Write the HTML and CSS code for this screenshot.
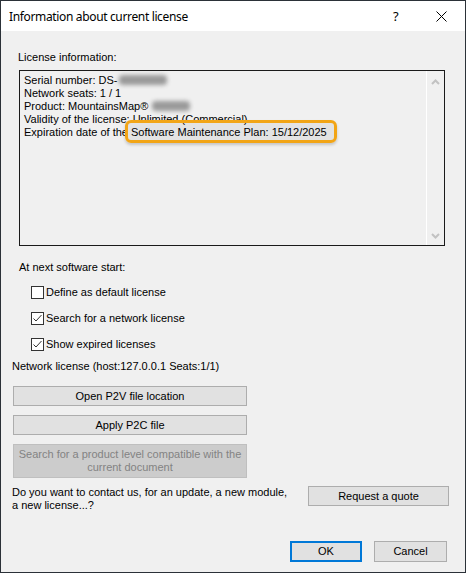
FILE: index.html
```html
<!DOCTYPE html>
<html>
<head>
<meta charset="utf-8">
<link rel="stylesheet" href="styles.css">
</head>
<body>
<div class="window">
  <div class="titlebar">
    <span class="title">Information about current license</span>
    <span class="help">?</span>
    <span class="close"><svg width="11" height="11" viewBox="0 0 11 11"><path d="M0.5 0.5 L10.5 10.5 M10.5 0.5 L0.5 10.5" stroke="#000" stroke-width="1" fill="none"/></svg></span>
  </div>
  <div class="content">
    <div class="section-label">License information:</div>
    <div class="infobox">
      <div class="infotext">
        <div>Serial number: DS-<span class="blur b1"></span></div>
        <div>Network seats: 1 / 1</div>
        <div>Product: MountainsMap® <span class="blur b2"></span></div>
        <div>Validity of the license: Unlimited (Commercial)</div>
        <div>Expiration date of the <span class="hl">Software Maintenance Plan: 15/12/2025</span></div>
      </div>
      <div class="scrollbar">
        <svg width="9" height="6" viewBox="0 0 9 6"><path d="M1 5 L4.5 1.5 L8 5" stroke="#c2c2c2" stroke-width="2" fill="none"/></svg>
        <svg width="9" height="6" viewBox="0 0 9 6"><path d="M1 1 L4.5 4.5 L8 1" stroke="#c2c2c2" stroke-width="2" fill="none"/></svg>
      </div>
    </div>
    <div class="next-label">At next software start:</div>
    <div class="checks">
      <label class="check"><span class="box"></span>Define as default license</label>
      <label class="check"><span class="box"><svg width="11" height="11" viewBox="0 0 11 11"><path d="M1.5 5.5 L4 8 L9.5 2" stroke="#333" stroke-width="1" fill="none"/></svg></span>Search for a network license</label>
      <label class="check"><span class="box"><svg width="11" height="11" viewBox="0 0 11 11"><path d="M1.5 5.5 L4 8 L9.5 2" stroke="#333" stroke-width="1" fill="none"/></svg></span>Show expired licenses</label>
    </div>
    <div class="netlic">Network license (host:127.0.0.1 Seats:1/1)</div>
    <div class="btn-stack">
      <div class="btn">Open P2V file location</div>
      <div class="btn">Apply P2C file</div>
      <div class="btn disabled">Search for a product level compatible with the<br>current document</div>
    </div>
    <div class="contact-row">
      <div class="contact-text">Do you want to contact us, for an update, a new module,<br>a new license...?</div>
      <div class="btn quote">Request a quote</div>
    </div>
    <div class="footer">
      <div class="btn ok">OK</div>
      <div class="btn cancel">Cancel</div>
    </div>
  </div>
</div>
</body>
</html>
```

FILE: styles.css
```css
html, body {
  margin: 0;
  padding: 0;
  background: #f0f0f0;
}
.window {
  width: 466px;
  height: 573px;
  box-sizing: border-box;
  border: 1px solid #2b3138;
  background: #f0f0f0;
  display: flex;
  flex-direction: column;
  font-family: "Liberation Sans", Arial, sans-serif;
  font-size: 11px;
  color: #000;
}
.titlebar {
  height: 30px;
  background: #fff;
  display: flex;
  align-items: center;
  flex-shrink: 0;
}
.title {
  font-family: "Noto Sans", "Open Sans", sans-serif;
  font-size: 12px;
  letter-spacing: -0.35px;
  margin-left: 8px;
  flex: 1;
}
.help {
  font-family: "Noto Sans", sans-serif;
  font-size: 13px;
  width: 10px;
  margin-right: 33px;
}
.close {
  width: 11px;
  height: 11px;
  margin-right: 18px;
  display: flex;
}
.content {
  display: flex;
  flex-direction: column;
  padding-left: 11px;
  line-height: 13px;
}
.section-label {
  margin-top: 20px;
  margin-left: 6px;
}
.infobox {
  margin-top: 6px;
  margin-left: 7px;
  width: 426px;
  height: 176px;
  box-sizing: border-box;
  border: 1px solid #1a1a1a;
  display: flex;
}
.infotext {
  flex: 1;
  padding: 3px 0 0 4px;
}
.blur {
  display: inline-block;
  height: 10px;
  vertical-align: -1px;
  background: #9a9a9a;
  filter: blur(2px);
  border-radius: 4px;
}
.b1 { width: 48px; margin-left: 1px; }
.b2 { width: 38px; margin-left: 1px; }
.hl {
  position: relative;
}
.hl::after {
  content: "";
  position: absolute;
  left: -6px;
  right: -10px;
  top: -6px;
  bottom: -5px;
  border: 3px solid #f2a516;
  border-radius: 6px;
  background: rgba(0,0,0,0.05);
  box-shadow: 0 2px 3px rgba(0,0,0,0.18);
}
.scrollbar {
  width: 17px;
  border-left: 1px solid #fff;
  display: flex;
  flex-direction: column;
  justify-content: space-between;
  align-items: center;
  padding: 8px 0 6px;
}
.next-label {
  margin-top: 15px;
  margin-left: 7px;
}
.checks {
  margin-top: 12px;
  margin-left: 19px;
  display: flex;
  flex-direction: column;
  gap: 13px;
}
.check {
  display: flex;
  align-items: center;
  height: 13px;
}
.box {
  width: 13px;
  height: 13px;
  box-sizing: border-box;
  border: 1px solid #333;
  background: #fff;
  margin-right: 2px;
  display: flex;
}
.netlic {
  margin-top: 9px;
}
.btn-stack {
  margin-top: 13px;
  margin-left: 1px;
  width: 234px;
  display: flex;
  flex-direction: column;
  gap: 9px;
}
.btn {
  box-sizing: border-box;
  border: 1px solid #adadad;
  background: #e1e1e1;
  text-align: center;
  height: 20px;
  display: flex;
  align-items: center;
  justify-content: center;
}
.btn.disabled {
  height: 34px;
  background: #cccccc;
  border-color: #bfbfbf;
  color: #838383;
}
.contact-row {
  margin-top: 8px;
  display: flex;
  justify-content: space-between;
  align-items: flex-start;
  padding-right: 16px;
}
.contact-text {
  margin-top: 0;
}
.quote {
  width: 141px;
}
.footer {
  margin-top: 29px;
  display: flex;
  justify-content: flex-end;
  gap: 12px;
  padding-right: 18px;
}
.ok, .cancel {
  width: 72px;
  height: 21px;
}
.ok {
  border: 2px solid #0078d7;
}
.cancel {
  width: 73px;
}
```
